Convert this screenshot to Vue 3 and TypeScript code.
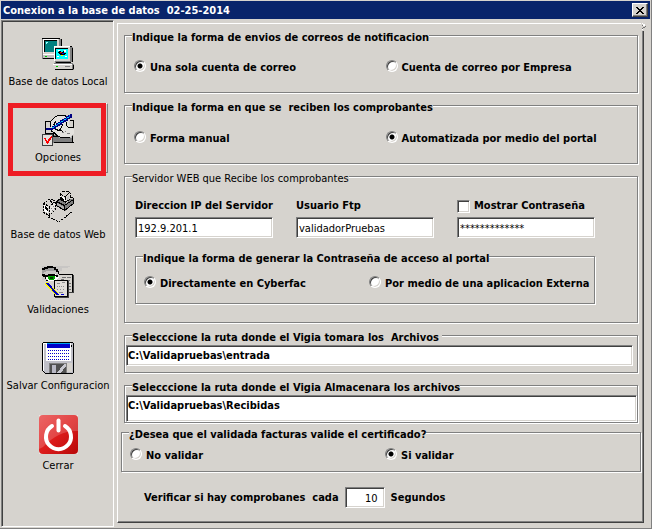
<script setup lang="ts">
import { ref } from 'vue'

const envio = ref('una')
const recepcion = ref('auto')
const generar = ref('cyberfac')
const certificado = ref('si')
const mostrar = ref(false)
const ip = ref('192.9.201.1')
const usuario = ref('validadorPruebas')
const clave = ref('*************')
const entrada = ref('C:\\Validapruebas\\entrada')
const recibidas = ref('C:\\Validapruebas\\Recibidas')
const segundos = ref('10')
</script>

<template>
  <div class="window">
    <header class="titlebar">
      <h1>Conexion a la base de datos&nbsp; 02-25-2014</h1>
      <button class="close" type="button" aria-label="Cerrar ventana">
        <svg width="8" height="7" viewBox="0 0 8 7" shape-rendering="crispEdges">
          <path d="M0 0h2v1h1v1h2V1h1V0h2v1H7v1H6v1H5v1h1v1h1v1h1v1H6V6H5V5H3v1H2v1H0V6h1V5h1V4h1V3H2V2H1V1H0z" />
        </svg>
      </button>
    </header>

    <div class="body">
      <nav class="sidebar">
        <button class="tool" type="button">
          <svg width="32" height="32" viewBox="0 0 32 32" shape-rendering="crispEdges">
            <path d="M1 0h16l3 2v15l-3 1H1z" fill="#808080" />
            <path d="M0 0h17v16H0z" fill="#d6d3ce" />
            <path d="M0 0h18v1H0zM19 1h1v8h-1zM1 20h11v1H1z" fill="#000" />
            <path d="M1 1h15v1H1zM1 1h1v14H1zM0 16h12v1H0z" fill="#fff" />
            <path d="M0 1h1v20H0z" fill="#808080" />
            <path d="M2 2h13v12H2z" fill="#000" /><path d="M3 3h12v11H3z" fill="#008080" />
            <path d="M4 4h2v1H5v1H4z" fill="#9ff" />
            <path d="M1 17h11v3H1z" fill="#c0c0c0" /><path d="M3 18h2v1H3z" fill="#0c0" />
            <path d="M12 8h17l2 2v13l-3 2H13z" fill="#808080" />
            <path d="M12 8h16v15H12z" fill="#d6d3ce" /><path d="M12 8h16v1H12zM12 8h1v15h-1z" fill="#fff" />
            <path d="M30 10h1v14h-1zM14 24h15v1H14zM28 8h2v1h-2z" fill="#000" />
            <path d="M13 10h13v11H13z" fill="#000" /><path d="M14 11h12v10H14z" fill="#0ff" />
            <path d="M16 12h2v1h-2zM22 12h2v2h-2zM15 18h2v1h-2zM23 18h2v1h-2z" fill="#fff" />
            <path d="M17 13h2v1h2v-1h1v2h2v1h-1v1h-2v1h-1v-1h-2v-1h-1v-1h-1z" fill="#000" />
            <path d="M18 14h2v1h-2z" fill="#e00" /><path d="M20 15h2v1h-2z" fill="#00f" /><path d="M19 17h2v1h-2z" fill="#ff0" />
            <path d="M12 25h18l2 2v4l-1 1H13z" fill="#808080" />
            <path d="M11 26h19v5H11z" fill="#d6d3ce" /><path d="M11 26h19v1H11z" fill="#fff" />
            <path d="M13 31h18v1H13zM31 27h1v4h-1z" fill="#000" /><path d="M14 28h2v1h-2z" fill="#0c0" /><path d="M23 28h5v1h-5z" fill="#808080" />
          </svg>
          <span>Base de datos Local</span>
        </button>

        <button class="tool current" type="button">
          <svg width="32" height="32" viewBox="0 0 32 32" shape-rendering="crispEdges">
            <path d="M3.500 7.500h9v12h-9z" fill="#d6d3ce" stroke="#000" />
            <path d="M11 21h20v8H11z" fill="#808080" /><path d="M13 20l4 4h13v-3z" fill="#b8b8b8" />
            <path d="M12 28h20v1H12zM30 22h1v7h-1z" fill="#000" />
            <path d="M9 8l4-5 5-2h4l4 3 2 9 4 2v5l-4 3h-9l-4-2-6-5z" fill="#e4e2de" />
            <path d="M8.500 12.500v-5l3-3 2-2 4-1.500h5l2 2M9.500 14v3l3 2 3 3 4 1.500h8M13.500 7.500l-2 4M15.500 9.500l4-1 1 3-3 5-4-1M18.500 16.500l3 1M24.500 7.500v4l2 2h5v-7h-4" fill="none" stroke="#000" />
            <path d="M11.500 20v2h4" fill="none" stroke="#000" />
            <path d="M20 18h2v1h-2zM23 17h1v1h-1zM25 19h3v1h-3z" fill="#808080" />
            <path d="M4 14h6v-2h2v-1h2V9h2V8h2V6h2V5h2V4h2V2h2V1h2V0h2v4h-2v1h-2v2h-2v1h-2v1h-2v2h-2v1h-2v1h-2v2h-3v1H4z" fill="#000080" />
            <path d="M10 13h2v1h-2zM13 11h2v1h-2zM16 9h2v1h-2zM19 7h2v1h-2zM22 5h2v1h-2zM25 3h2v1h-2z" fill="#00d0ff" />
            <path d="M12 12h1v1h-1zM15 10h1v1h-1zM18 8h1v1h-1zM21 6h1v1h-1zM24 4h1v1h-1zM27 1h1v2h-1z" fill="#0060ff" />
            <path d="M0 20h11v12H0z" fill="#404040" /><path d="M1 21h9v10H1z" fill="#e4e2de" />
            <path d="M2 24h2v2h1v1h1v-2h1v-1h1v-1h1v-1h1v2H9v2H8v1H7v2H6v1H5v-1H4v-2H3v-2H2z" fill="#f00" />
          </svg>
          <span>Opciones</span>
          <i class="mark"></i>
        </button>

        <button class="tool" type="button">
          <svg width="33" height="33" viewBox="0 0 33 33" shape-rendering="crispEdges">
            <path d="M6 27l11 5 14-11" fill="none" stroke="#000" stroke-dasharray="2 1" />
            <path d="M1 13l7-5 6 3v9l-7 6-6-3z" fill="#d6d3ce" />
            <path d="M8 17l5-4v6l-5 4z" fill="#e8e6e2" /><path d="M2 15l4 2v6l-4-2z" fill="#fff" />
            <path d="M1.500 13.500l7-5 5 3v8l-6 6-6-3z" fill="none" stroke="#000" stroke-dasharray="2 1" />
            <path d="M1.500 13.500l6 3 6-5M7.500 16.500v10" fill="none" stroke="#000" stroke-dasharray="2 1" />
            <path d="M3 16l3 2v3l-3-2zM8 10l3 2-2 1z" fill="#000" />
            <path d="M9 18h1v1H9zM11 16h1v1h-1zM10 20h1v1h-1zM12 18h1v1h-1z" fill="#808080" />
            <path d="M14 11l5-3 12 1v4l-8 8-9-5z" fill="#808080" />
            <path d="M14.500 11.500l4-3M14.500 11.500v4l8 5 9-7v-5l-3-2M14.500 11.500l8 4 9-6M22.500 15.500v5" fill="none" stroke="#000" />
            <path d="M15 13l7 4v2l-7-4z" fill="#b0b0b0" />
            <path d="M18 4l3-3h6l2 3v5l-5 4-6-3z" fill="#d6d3ce" />
            <path d="M18 6l5 2v4l-5-3z" fill="#fff" /><path d="M19 7l3 2v3l-3-2z" fill="#000" />
            <path d="M18.500 9.500v-6l3-2.500h5l2 3v5l-5 3zM18.500 4.500l5 2 4-4M23.500 6.500v5" fill="none" stroke="#000" stroke-dasharray="3 1" />
            <path d="M25 7l2-2v3l-2 2z" fill="#c0c0c0" />
          </svg>
          <span>Base de datos Web</span>
        </button>

        <button class="tool" type="button">
          <svg width="32" height="32" viewBox="0 0 32 32" shape-rendering="crispEdges">
            <path d="M0 0h28v1h-2v1h-6v3h-4v9H0z" fill="#c8c6c4" />
            <path d="M0 3l5-2h7l5 5-4-1H5L0 8z" fill="#a0a0a0" />
            <path d="M0 2h2V1h3V0h6v1h3v2h2v2h1v3h-1V6h-2V4h-2V2H6v1H3v1H0z" fill="#000" />
            <path d="M3 12l3-3 7-1 4 4-4 3H6z" fill="#fff" />
            <path d="M0 8h3v1h3V8h7v1h3v2h2v1h-1v-1h-3v-1H6v1H4v2H3v-2H1v-1H0z" fill="#000" />
            <path d="M6 10h7v3h-1v1H7v-1H6z" fill="#00a000" /><path d="M8 11h3v2H8z" fill="#003c00" />
            <path d="M4 14h2v1H4zM12 14h3v1h-3z" fill="#000" />
            <path d="M18 9h14v18H18z" fill="#404040" /><path d="M17 8h13v18H17z" fill="#d6d3ce" />
            <path d="M17 8h14v1H17zM30 8h1v18h-1z" fill="#000" />
            <path d="M20 11h4v1h-4zM25 11h4v1h-4zM19 13h3v1h-3zM24 14h4v1h-4zM26 17h3v1h-3zM26 20h3v1h-3zM26 23h3v1h-3z" fill="#707070" />
            <path d="M13 15h14v17H13z" fill="#404040" /><path d="M12 14h13v17H12z" fill="#e0ddd8" />
            <path d="M12 14h14v1H12zM12 14h1v17h-1zM25 14h1v17h-1zM12 30h14v1H12z" fill="#000" />
            <path d="M15 17h3v1h-3zM20 16h3v1h-3zM15 20h1v1h-1zM17 20h1v1h-1zM19 20h1v1h-1zM21 20h1v1h-1zM15 23h1v1h-1zM18 23h1v1h-1zM21 23h1v1h-1zM17 26h4v1h-4z" fill="#909090" />
            <path d="M4 17l11 11" stroke="#ffff00" stroke-width="3" /><path d="M5 17l10 11" stroke="#0000c0" stroke-width="2" />
            <path d="M14 28h3v1h-3zM19 28h3v1h-3z" fill="#00c" />
          </svg>
          <span>Validaciones</span>
        </button>

        <button class="tool" type="button">
          <svg width="32" height="32" viewBox="0 0 32 32" shape-rendering="crispEdges">
            <path d="M1 0h30v1h1v30h-1v1H3v-1H2v-1H1v-1H0V1h1z" fill="#000" />
            <path d="M1 1h30v30H3v-1H2v-1H1z" fill="#c0c0c8" />
            <path d="M1 1h1v28H1zM1 1h3v1H1z" fill="#fff" />
            <path d="M4 1h25v18H4z" fill="#fff" />
            <path d="M5 1h23v1H5z" fill="#00a0f0" /><path d="M5 2h23v4H5z" fill="#0000c8" />
            <g fill="none" stroke="#0000c8" stroke-dasharray="1 1">
              <path d="M6 8.500h21M6 11.500h21M6 14.500h21M6 17.500h21" />
            </g>
            <path d="M29 3h1v2h-1z" fill="#000" />
            <path d="M7 21h18v10H7z" fill="#808080" /><path d="M8 22h16v9H8z" fill="#505050" />
            <path d="M10 23h4v8h-4z" fill="#b8b8c4" /><path d="M15 31l7-9h2v2l-5 7z" fill="#c8c8d0" />
            <path d="M25 21h5v9h-5z" fill="#d6d3ce" />
          </svg>
          <span>Salvar Configuracion</span>
        </button>

        <button class="tool large" type="button">
          <svg width="39" height="39" viewBox="0 0 39 39">
            <defs>
              <linearGradient id="power" x1="0" y1="0" x2="1" y2="1">
                <stop offset="0" stop-color="#e84444" />
                <stop offset="0.5" stop-color="#dc1c1c" />
                <stop offset="1" stop-color="#b80808" />
              </linearGradient>
            </defs>
            <rect width="39" height="39" fill="#eee4e2" />
            <rect width="39" height="39" rx="4" fill="url(#power)" />
            <path d="M0 4q0-4 4-4h31q4 0 4 4v12Q20 15 4 32L0 34z" fill="#fff" opacity="0.18" />
            <path d="M13 11A12.500 12.500 0 1 0 26 11" fill="none" stroke="#fff" stroke-width="4" stroke-linecap="round" />
            <path d="M19.500 5.500v10" stroke="#fff" stroke-width="4" stroke-linecap="round" />
          </svg>
          <span>Cerrar</span>
        </button>
      </nav>

      <main class="panel">
        <svg class="corner" width="6" height="8" viewBox="0 0 6 8" shape-rendering="crispEdges">
          <path d="M1 0h1v1H1zM2 1h2v2H2zM1 6h1v1H1z" fill="#fff" />
          <path d="M1 2h1v1H1zM4 3h1v1H4zM2 4h2v1H2zM1 5h1v1H1z" fill="#707070" />
        </svg>

        <fieldset class="group sending">
          <legend>Indique la forma de envios de correos de notificacion</legend>
          <div class="pair">
            <label><input v-model="envio" type="radio" name="envio" value="una" />Una sola cuenta de correo</label>
            <label><input v-model="envio" type="radio" name="envio" value="empresa" />Cuenta de correo por Empresa</label>
          </div>
        </fieldset>

        <fieldset class="group receiving">
          <legend>Indique la forma en que se&nbsp; reciben los comprobantes</legend>
          <div class="pair">
            <label><input v-model="recepcion" type="radio" name="recepcion" value="manual" />Forma manual</label>
            <label><input v-model="recepcion" type="radio" name="recepcion" value="auto" />Automatizada por medio del portal</label>
          </div>
        </fieldset>

        <fieldset class="group server">
          <legend class="plain">Servidor WEB que Recibe los comprobantes</legend>
          <div class="fields">
            <div class="field">
              <label for="ip">Direccion IP del Servidor</label>
              <input id="ip" v-model="ip" class="text" type="text" />
            </div>
            <div class="field">
              <label for="usuario">Usuario Ftp</label>
              <input id="usuario" v-model="usuario" class="text" type="text" />
            </div>
            <div class="field">
              <label><input v-model="mostrar" type="checkbox" />Mostrar Contraseña</label>
              <input v-model="clave" class="text" type="text" aria-label="Contraseña" />
            </div>
          </div>
          <fieldset class="group access">
            <legend>Indique la forma de generar la Contraseña de acceso al portal</legend>
            <div class="pair">
              <label><input v-model="generar" type="radio" name="generar" value="cyberfac" />Directamente en Cyberfac</label>
              <label><input v-model="generar" type="radio" name="generar" value="externa" />Por medio de una aplicacion Externa</label>
            </div>
          </fieldset>
        </fieldset>

        <fieldset class="group path">
          <legend>Selecccione la ruta donde el Vigia tomara los&nbsp; Archivos&nbsp;</legend>
          <input v-model="entrada" class="text strong" type="text" aria-label="Ruta de entrada" />
        </fieldset>

        <fieldset class="group store">
          <legend>Selecccione la ruta donde el Vigia Almacenara los archivos</legend>
          <textarea v-model="recibidas" class="text strong" rows="1" aria-label="Ruta de recibidas"></textarea>
        </fieldset>

        <fieldset class="group certificate">
          <legend>¿Desea que el validada facturas valide el certificado?</legend>
          <div class="pair">
            <label><input v-model="certificado" type="radio" name="certificado" value="no" />No validar</label>
            <label><input v-model="certificado" type="radio" name="certificado" value="si" />Si validar</label>
          </div>
        </fieldset>

        <div class="interval">
          <label for="segundos">Verificar si hay comprobanes&nbsp; cada</label>
          <input id="segundos" v-model="segundos" class="text" type="text" />
          <span>Segundos</span>
        </div>
      </main>
    </div>
  </div>
</template>

<style>
body {
  background: #d6d3ce;
}
</style>

<style scoped>
.window,
.window * {
  box-sizing: border-box;
}

.window {
  display: flex;
  flex-direction: column;
  min-height: 100vh;
  padding: 1px 0 1px 1px;
  border-right: 1px solid #808080;
  border-bottom: 1px solid #808080;
  background: #d6d3ce;
  color: #000;
  font-family: "DejaVu Sans Condensed", "DejaVu Sans", sans-serif;
  font-size: 11px;
  line-height: 13px;
  white-space: nowrap;
}

button,
input,
textarea {
  margin: 0;
  color: inherit;
  font: inherit;
}

.titlebar {
  display: flex;
  align-items: center;
  justify-content: space-between;
  height: 18px;
  margin-right: 1px;
  padding: 0 2px;
  background: #08246b;
  color: #fff;
}

h1 {
  margin: 0;
  padding-top: 2px;
  font-size: 11px;
  line-height: 16px;
}

.close {
  display: flex;
  align-items: center;
  justify-content: center;
  width: 16px;
  height: 14px;
  padding: 0;
  border: 1px solid;
  border-color: #fff #404040 #404040 #fff;
  box-shadow: inset -1px -1px #808080;
  background: #d6d3ce;
  color: #000;
}

.body {
  display: flex;
  flex: 1;
  gap: 3px;
  padding-top: 1px;
}

.sidebar {
  display: flex;
  flex-direction: column;
  gap: 6px;
  width: 113px;
  padding: 6px 5px 4px 6px;
  border: 1px solid;
  border-color: #808080 #fff #fff #808080;
  box-shadow: inset 1px 1px #404040;
}

.tool {
  position: relative;
  display: flex;
  flex-direction: column;
  align-items: center;
  gap: 5px;
  height: 70px;
  padding: 10px 0 0;
  border: 1px solid transparent;
  background: none;
}

.tool svg {
  flex: none;
}

.tool.large {
  padding-top: 7px;
}

.tool.current {
  border-color: #fff #808080 #808080 #fff;
}

.mark {
  position: absolute;
  inset: -1px 1px -4px -1px;
  border: 5px solid #ee1c24;
}

.panel {
  position: relative;
  flex: 1;
  margin: 3px 7px 4px 0;
  padding: 3px 4px 13px 6px;
  border: 1px solid;
  border-color: #fff #404040 #404040 #fff;
  box-shadow: inset -1px -1px #808080;
  font-weight: bold;
}

.corner {
  position: absolute;
  top: -1px;
  right: -4px;
  background: #d6d3ce;
}

/* --inset is the left padding of a group; the caption sits 7px in from the frame whatever it is. */
.group {
  --inset: 9px;
  min-width: 0;
  margin: 0 1px 4px 0;
  padding: 0 0 0 var(--inset);
  border: 1px solid #808080;
  box-shadow: 1px 1px #fff, inset 1px 1px #fff;
}

legend {
  margin-left: calc(7px - var(--inset));
  padding: 4px 0 0;
  background: #d6d3ce;
}

.plain {
  font-weight: normal;
}

.pair {
  display: grid;
  grid-template-columns: 1fr 1fr;
  line-height: 18px;
}

label {
  display: flex;
  align-items: center;
}

.pair label {
  align-items: flex-start;
}

.sending {
  padding-top: 15px;
  padding-bottom: 15px;
}

.receiving {
  padding-top: 16px;
  padding-bottom: 15px;
}

.server {
  --inset: 10px;
  padding-top: 12px;
  padding-right: 42px;
  padding-bottom: 18px;
}

.fields {
  display: grid;
  grid-template-columns: repeat(3, 1fr);
  gap: 23px;
}

.field {
  display: flex;
  flex-direction: column;
  gap: 2px;
  line-height: 18px;
}

.access {
  --inset: 8px;
  margin: 10px 0 0;
  padding-top: 10px;
  padding-bottom: 10px;
}

.path {
  --inset: 1px;
  padding-top: 1px;
  padding-right: 4px;
  padding-bottom: 6px;
}

.store {
  --inset: 1px;
  margin-bottom: 1px;
  padding-top: 1px;
}

.certificate {
  --inset: 8px;
  margin: 0 -2px 15px -3px;
  padding-top: 6px;
  padding-bottom: 6px;
}

.text {
  display: block;
  width: 100%;
  height: 21px;
  padding: 2px 2px 0;
  border: 1px solid;
  border-color: #808080 #fff #fff #808080;
  border-radius: 0;
  box-shadow: inset 1px 1px #404040, inset -1px -1px #d6d3ce;
  background: #fff;
  font-weight: normal;
  line-height: 13px;
  outline: none;
}

.strong {
  padding: 0 1px;
  font-weight: bold;
}

textarea.text {
  height: 27px;
  padding-top: 3px;
  overflow: hidden;
  resize: none;
}

input[type="radio"] {
  flex: none;
  width: 12px;
  height: 12px;
  margin: 1px 4px 0 0;
  border: 1px solid;
  border-color: #808080 #fff #fff #808080;
  border-radius: 50%;
  box-shadow: inset 1px 1px #404040, inset -1px -1px #d6d3ce;
  background: #fff;
  appearance: none;
}

input[type="radio"]:checked {
  background: radial-gradient(circle, #000 0 2px, #fff 3px);
}

input[type="checkbox"] {
  flex: none;
  width: 13px;
  height: 13px;
  margin-right: 4px;
  border: 1px solid;
  border-color: #808080 #fff #fff #808080;
  box-shadow: inset 1px 1px #404040, inset -1px -1px #d6d3ce;
  background: #fff;
  appearance: none;
}

.interval {
  display: flex;
  align-items: center;
  gap: 6px;
  padding-left: 20px;
}

.interval .text {
  width: 40px;
  padding-right: 6px;
  text-align: right;
}
</style>
